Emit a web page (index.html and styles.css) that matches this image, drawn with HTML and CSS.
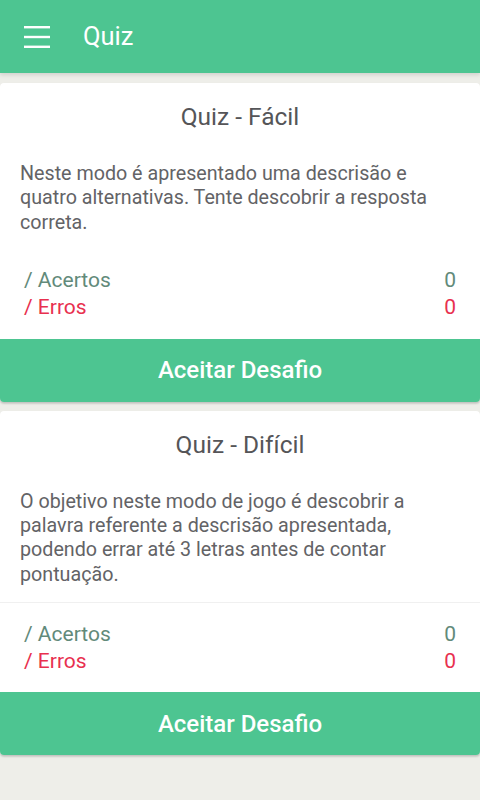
FILE: index.html
```html
<!DOCTYPE html>
<html lang="pt">
<head>
<meta charset="utf-8">
<link rel="stylesheet" href="styles.css">
</head>
<body>
<header class="appbar">
  <svg class="menu" width="26" height="22" viewBox="0 0 26 22"><rect x="0" y="0" width="26" height="2.4" fill="#fff"/><rect x="0" y="9.8" width="26" height="2.4" fill="#fff"/><rect x="0" y="19.6" width="26" height="2.4" fill="#fff"/></svg>
  <span class="appbar-title">Quiz</span>
</header>
<main class="content">
  <section class="card">
    <h2 class="card-title">Quiz - Fácil</h2>
    <p class="card-text">Neste modo é apresentado uma descrisão e quatro alternativas. Tente descobrir a resposta correta.</p>
    <div class="stats stats-first">
      <div class="stat ok"><span>/ Acertos</span><span>0</span></div>
      <div class="stat err"><span>/ Erros</span><span>0</span></div>
    </div>
    <button class="btn">Aceitar Desafio</button>
  </section>
  <section class="card">
    <h2 class="card-title">Quiz - Difícil</h2>
    <p class="card-text">O objetivo neste modo de jogo é descobrir a palavra referente a descrisão apresentada, podendo errar até 3 letras antes de contar pontuação.</p>
    <div class="stats stats-divided">
      <div class="stat ok"><span>/ Acertos</span><span>0</span></div>
      <div class="stat err"><span>/ Erros</span><span>0</span></div>
    </div>
    <button class="btn">Aceitar Desafio</button>
  </section>
</main>
</body>
</html>
```
FILE: styles.css
```css
* { box-sizing: border-box; }
html, body { margin: 0; padding: 0; }
body {
  background: #eeeee9;
  font-family: Roboto, "Noto Sans", sans-serif;
  width: 480px;
  min-height: 800px;
}
.appbar {
  height: 73px;
  background: #4dc591;
  display: flex;
  align-items: center;
  padding-left: 24px;
  box-shadow: 0 2px 4px rgba(0,0,0,0.12);
  position: relative;
  z-index: 1;
}
.menu { display: block; margin-top: 1px; }
.appbar-title {
  color: #fff;
  font-size: 25.5px;
  margin-left: 33px;
  margin-top: -2px;
}
.content {
  padding-top: 10px;
  display: flex;
  flex-direction: column;
  gap: 9px;
}
.card {
  background: #fff;
  border-radius: 4px;
  box-shadow: 0 1px 2px rgba(0,0,0,0.08);
  display: flex;
  flex-direction: column;
}
.card-title {
  margin: 0;
  padding-top: 19px;
  font-size: 24.5px;
  line-height: 30px;
  font-weight: 400;
  text-align: center;
  color: #555558;
}
.card-text {
  margin: 30px 0 0;
  padding: 0 20px;
  font-size: 19.7px;
  line-height: 24.3px;
  color: #636366;
}
.stats {
  padding: 0 24px 18px;
}
.stats-first { margin-top: 32px; }
.stats-divided {
  margin-top: 15px;
  border-top: 1px solid #f0f0f0;
  padding-top: 18px;
  padding-bottom: 17px;
}
.stat {
  display: flex;
  justify-content: space-between;
  font-size: 21px;
  line-height: 27px;
}
.ok { color: #628a7a; }
.err { color: #e8304f; }
.btn {
  display: block;
  width: 100%;
  height: 63px;
  border: 0;
  margin: 0;
  background: #4dc591;
  color: #fff;
  font-family: Roboto, "Noto Sans", sans-serif;
  font-size: 24px;
  font-weight: 500;
  border-radius: 0 0 4px 4px;
  box-shadow: 0 2px 2px rgba(0,0,0,0.12);
  padding: 0;
}
```
